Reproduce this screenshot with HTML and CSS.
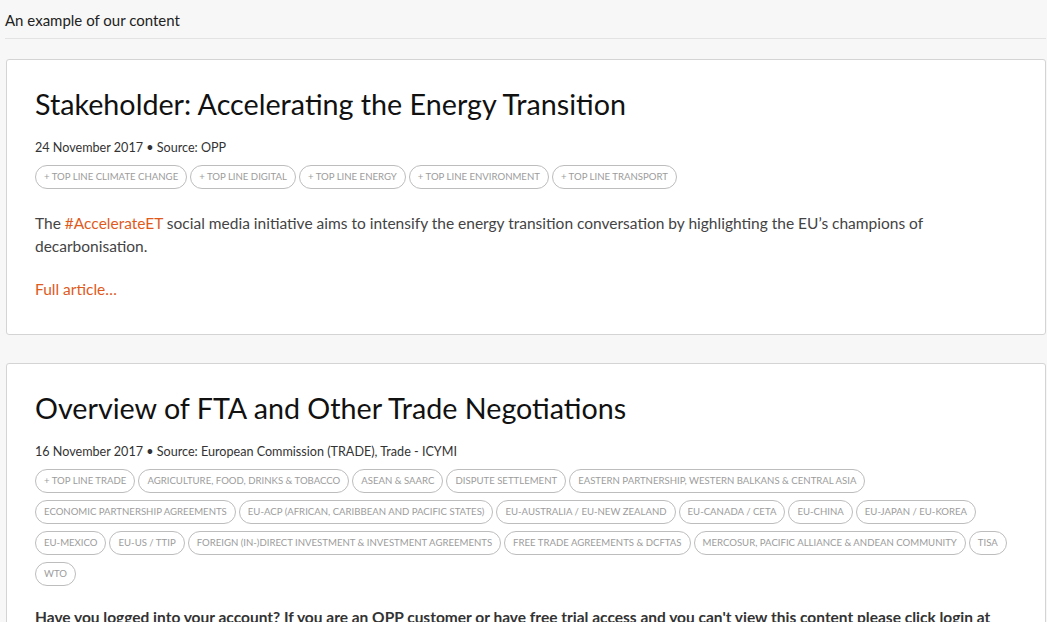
FILE: index.html
```html
<!DOCTYPE html>
<html lang="en">
<head>
  <meta charset="UTF-8">
  <title>An example of our content</title>
  <link rel="stylesheet" href="styles.css">
</head>
<body>
  <div class="page">
    <h2 class="intro">An example of our content</h2>

    <div class="card">
      <h1>Stakeholder: Accelerating the Energy Transition</h1>
      <div class="meta">24 November 2017 &bull; Source: OPP</div>
      <div class="tags">
        <span class="tag">+ Top line Climate Change</span>
        <span class="tag">+ Top line Digital</span>
        <span class="tag">+ Top line Energy</span>
        <span class="tag">+ Top line Environment</span>
        <span class="tag">+ Top line Transport</span>
      </div>
      <p>The <a href="#">#AccelerateET</a> social media initiative aims to intensify the energy transition conversation by highlighting the EU&rsquo;s champions of decarbonisation.</p>
      <p><a href="#">Full article&hellip;</a></p>
    </div>

    <div class="card">
      <h1>Overview of FTA and Other Trade Negotiations</h1>
      <div class="meta">16 November 2017 &bull; Source: European Commission (TRADE), Trade - ICYMI</div>
      <div class="tags">
        <span class="tag">+ Top line Trade</span>
        <span class="tag">Agriculture, Food, Drinks &amp; Tobacco</span>
        <span class="tag">ASEAN &amp; SAARC</span>
        <span class="tag">Dispute Settlement</span>
        <span class="tag">Eastern Partnership, Western Balkans &amp; Central Asia</span>
        <span class="tag">Economic Partnership Agreements</span>
        <span class="tag">EU-ACP (African, Caribbean and Pacific States)</span>
        <span class="tag">EU-Australia / EU-New Zealand</span>
        <span class="tag">EU-Canada / CETA</span>
        <span class="tag">EU-China</span>
        <span class="tag">EU-Japan / EU-Korea</span>
        <span class="tag">EU-Mexico</span>
        <span class="tag">EU-US / TTIP</span>
        <span class="tag">Foreign (In-)Direct Investment &amp; Investment Agreements</span>
        <span class="tag">Free Trade Agreements &amp; DCFTAs</span>
        <span class="tag">Mercosur, Pacific Alliance &amp; Andean Community</span>
        <span class="tag">TiSA</span>
        <span class="tag">WTO</span>
      </div>
      <p class="notice">Have you logged into your account? If you are an OPP customer or have free trial access and you can't view this content please click login at the top of the page.</p>
    </div>
  </div>
</body>
</html>
```

FILE: styles.css
```css
body {
  margin: 0;
  background: #f7f7f7;
  font-family: Lato, "Liberation Sans", sans-serif;
  color: #222;
}

.page {
  padding: 0 1px 0 5px;
}

.intro {
  margin: 0;
  padding: 10px 0 8px;
  font-size: 15px;
  font-weight: normal;
  line-height: 20px;
  color: #222;
  border-bottom: 1px solid #e3e3e3;
}

.card {
  background: #fff;
  border: 1px solid #d4d4d4;
  border-radius: 3px;
  margin: 20px 0 28px 1px;
  padding: 28px 28px 33px;
}

h1 {
  margin: 0;
  font-size: 28.7px;
  font-weight: normal;
  line-height: 33px;
  color: #111;
}

.meta {
  margin-top: 17px;
  font-size: 12.6px;
  line-height: 20px;
  color: #333;
}

.tags {
  display: flex;
  flex-wrap: wrap;
  gap: 7px 3px;
  margin-top: 7px;
}

.tag {
  display: inline-block;
  height: 22px;
  line-height: 22px;
  padding: 0 8px;
  border: 1px solid #bdbdbd;
  border-radius: 12px;
  font-size: 9.6px;
  text-transform: uppercase;
  color: #9c9c9c;
}

p {
  margin: 23px 0 0;
  font-size: 15.5px;
  line-height: 23px;
  color: #444;
}

p + p {
  margin-top: 20px;
}

a {
  color: #e05a1c;
  text-decoration: none;
}

.notice {
  margin-top: 20px;
  padding-right: 12px;
  font-weight: bold;
  color: #333;
}
```
